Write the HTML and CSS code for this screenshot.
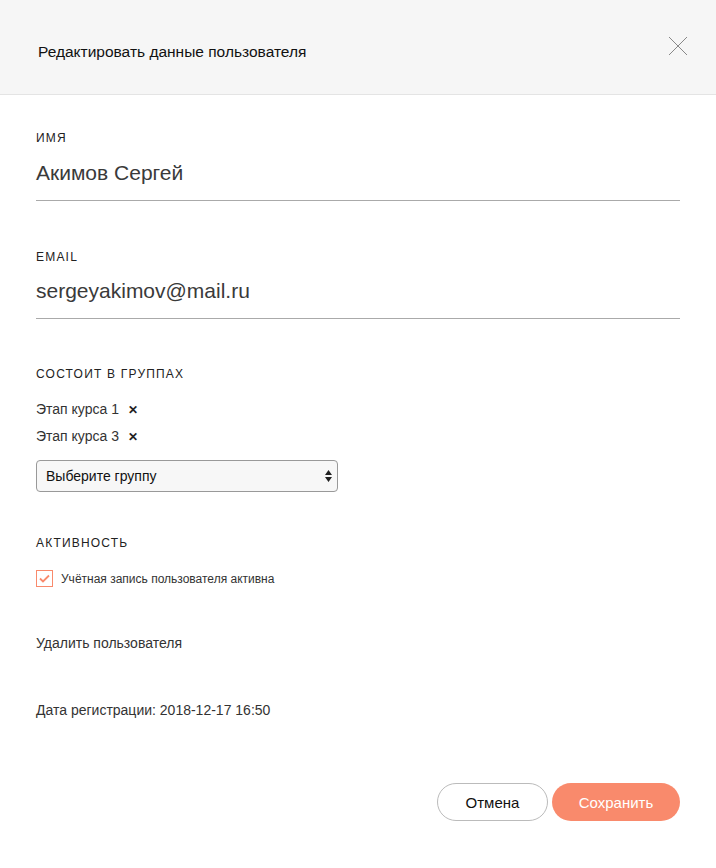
FILE: index.html
```html
<!DOCTYPE html>
<html lang="ru">
<head>
<meta charset="utf-8">
<link rel="stylesheet" href="styles.css">
</head>
<body>
<div class="modal">
  <header class="modal-header">
    <h1 class="modal-title">Редактировать данные пользователя</h1>
    <button class="close" aria-label="Закрыть">
      <svg width="20" height="20" viewBox="0 0 20 20"><path d="M1 1L19 19M19 1L1 19" stroke="#888" stroke-width="1" fill="none"/></svg>
    </button>
  </header>
  <main class="modal-body">
    <section class="field">
      <div class="label">Имя</div>
      <div class="value">Акимов Сергей</div>
    </section>
    <section class="field">
      <div class="label">Email</div>
      <div class="value">sergeyakimov@mail.ru</div>
    </section>
    <section class="groups">
      <div class="label">Состоит в группах</div>
      <ul class="tags">
        <li class="tag">Этап курса 1 <span class="x">✕</span></li>
        <li class="tag">Этап курса 3 <span class="x">✕</span></li>
      </ul>
      <div class="select">
        <span>Выберите группу</span>
        <svg width="7" height="12" viewBox="0 0 7 12"><path d="M3.5 0L7 5H0Z M3.5 12L0 7H7Z" fill="#222"/></svg>
      </div>
    </section>
    <section class="activity">
      <div class="label">Активность</div>
      <label class="check">
        <span class="box"><svg width="11" height="9" viewBox="0 0 11 9"><path d="M1 4.5L4 7.5L10 1.5" stroke="#f98a6c" stroke-width="1.8" fill="none"/></svg></span>
        <span class="check-text">Учётная запись пользователя активна</span>
      </label>
    </section>
    <div class="delete">Удалить пользователя</div>
    <div class="date">Дата регистрации: 2018-12-17 16:50</div>
    <div class="actions">
      <button class="btn btn-cancel">Отмена</button>
      <button class="btn btn-save">Сохранить</button>
    </div>
  </main>
</div>
</body>
</html>
```
FILE: styles.css
```css
* { box-sizing: border-box; }
html, body { margin: 0; padding: 0; background: #fff; }
body { font-family: "Liberation Sans", Arial, sans-serif; color: #222; }
.modal { width: 716px; }
.modal-header {
  height: 95px;
  background: #f6f6f6;
  border-bottom: 1px solid #e4e4e4;
  display: flex;
  align-items: center;
  justify-content: space-between;
  padding: 10px 28px 0 38px;
}
.modal-title { margin: 0; font-size: 15.5px; font-weight: normal; color: #111; }
.close { background: none; border: 0; padding: 0; width: 20px; height: 20px; margin-top: -12px; }
.close svg { display: block; }
.modal-body { padding: 0 36px; }
.label {
  font-size: 12px;
  text-transform: uppercase;
  letter-spacing: 1.2px;
  color: #222;
}
.field { padding-top: 36px; }
.field + .field { padding-top: 49px; }
.field .value {
  font-size: 21px;
  color: #3a3a3a;
  padding: 16px 0 15px;
  border-bottom: 1px solid #aaa;
}
.field + .field .value { padding-top: 15px; }
.groups { padding-top: 48px; }
.tags { list-style: none; margin: 20px 0 0; padding: 0; display: flex; flex-direction: column; gap: 9px; }
.tag { font-size: 14px; color: #333; line-height: 17px; }
.tag .x { font-size: 12px; font-weight: bold; margin-left: 5px; color: #222; }
.select {
  margin-top: 14px;
  width: 302px;
  height: 32px;
  border: 1px solid #999;
  border-radius: 4px;
  background: #f7f7f7;
  display: flex;
  align-items: center;
  justify-content: space-between;
  padding: 0 5px 0 9px;
  font-size: 14px;
  color: #111;
}
.activity { padding-top: 44px; }
.check { display: flex; align-items: center; gap: 8px; margin-top: 20px; }
.box {
  width: 17px; height: 17px;
  border: 1px solid #f98a6c;
  display: flex; align-items: center; justify-content: center;
}
.check-text { font-size: 12px; color: #333; }
.delete { font-size: 14px; color: #333; margin-top: 48px; }
.date { font-size: 14px; color: #333; margin-top: 51px; }
.actions { display: flex; justify-content: flex-end; gap: 4px; margin-top: 65px; }
.btn {
  height: 38px;
  border-radius: 19px;
  font-family: inherit;
  font-size: 15px;
  cursor: pointer;
}
.btn-cancel { width: 111px; background: #fff; border: 1px solid #bbb; color: #111; }
.btn-save { width: 128px; background: #f98a6c; border: 0; color: #fff; }
```
